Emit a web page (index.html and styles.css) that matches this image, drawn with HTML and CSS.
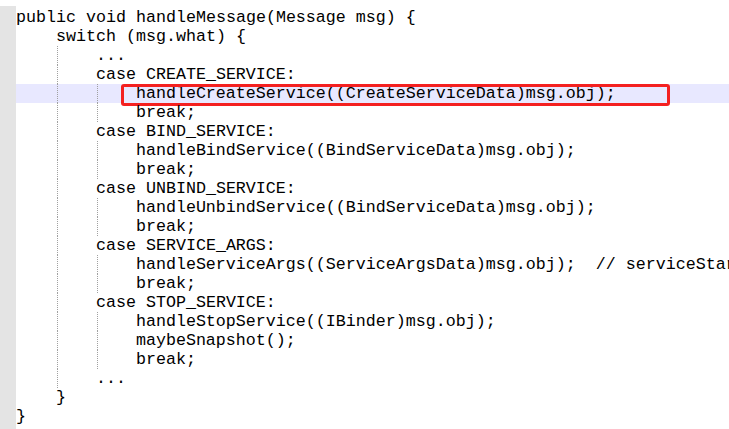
FILE: index.html
```html
<!DOCTYPE html>
<html>
<head>
<meta charset="utf-8">
<link rel="stylesheet" href="styles.css">
</head>
<body>
<div class="editor">
  <div class="gutter"></div>
  <div class="code">
    <div class="ln">public void handleMessage(Message msg) {</div>
    <div class="ln"><span class="ind"></span>switch (msg.what) {</div>
    <div class="ln"><span class="ind"></span><span class="ind"></span>...</div>
    <div class="ln"><span class="ind"></span><span class="ind"></span>case CREATE_SERVICE:</div>
    <div class="ln hl"><span class="ind"></span><span class="ind"></span><span class="ind"></span>handleCreateService((CreateServiceData)msg.obj);<span class="mark"></span></div>
    <div class="ln"><span class="ind"></span><span class="ind"></span><span class="ind"></span>break;</div>
    <div class="ln"><span class="ind"></span><span class="ind"></span>case BIND_SERVICE:</div>
    <div class="ln"><span class="ind"></span><span class="ind"></span><span class="ind"></span>handleBindService((BindServiceData)msg.obj);</div>
    <div class="ln"><span class="ind"></span><span class="ind"></span><span class="ind"></span>break;</div>
    <div class="ln"><span class="ind"></span><span class="ind"></span>case UNBIND_SERVICE:</div>
    <div class="ln"><span class="ind"></span><span class="ind"></span><span class="ind"></span>handleUnbindService((BindServiceData)msg.obj);</div>
    <div class="ln"><span class="ind"></span><span class="ind"></span><span class="ind"></span>break;</div>
    <div class="ln"><span class="ind"></span><span class="ind"></span>case SERVICE_ARGS:</div>
    <div class="ln"><span class="ind"></span><span class="ind"></span><span class="ind"></span>handleServiceArgs((ServiceArgsData)msg.obj);  // serviceStart</div>
    <div class="ln"><span class="ind"></span><span class="ind"></span><span class="ind"></span>break;</div>
    <div class="ln"><span class="ind"></span><span class="ind"></span>case STOP_SERVICE:</div>
    <div class="ln"><span class="ind"></span><span class="ind"></span><span class="ind"></span>handleStopService((IBinder)msg.obj);</div>
    <div class="ln"><span class="ind"></span><span class="ind"></span><span class="ind"></span>maybeSnapshot();</div>
    <div class="ln"><span class="ind"></span><span class="ind"></span><span class="ind"></span>break;</div>
    <div class="ln"><span class="ind"></span><span class="ind"></span>...</div>
    <div class="ln"><span class="ind"></span>}</div>
    <div class="ln">}</div>
  </div>
</div>
</body>
</html>
```
FILE: styles.css
```css
html, body {
  margin: 0;
  padding: 0;
  background: #ffffff;
}

.editor {
  display: flex;
  box-sizing: border-box;
  min-height: 100vh;
  padding-top: 6px;
  overflow: hidden;
}

.gutter {
  flex: 0 0 16px;
  background: #e4e4e4;
}

.code {
  flex: 1;
  min-width: 0;
  padding-top: 2px;
  font-family: "Liberation Mono", "Courier New", monospace;
  font-size: 16.664px;
  color: #000000;
}

.ln {
  position: relative;
  height: 19px;
  line-height: 19px;
  white-space: pre;
  overflow: visible;
}

.ind {
  display: inline-block;
  width: 4ch;
  height: 19px;
  vertical-align: top;
}

.ind + .ind {
  background: linear-gradient(#a0a0a0 50%, transparent 50%) 1px 0 / 1px 2px repeat-y;
}

.hl {
  background: #e8e8ff;
}

.mark {
  position: absolute;
  left: 105px;
  top: 0;
  width: 549px;
  height: 22px;
  box-sizing: border-box;
  border: 3px solid #f42020;
  border-radius: 3px;
}
```
